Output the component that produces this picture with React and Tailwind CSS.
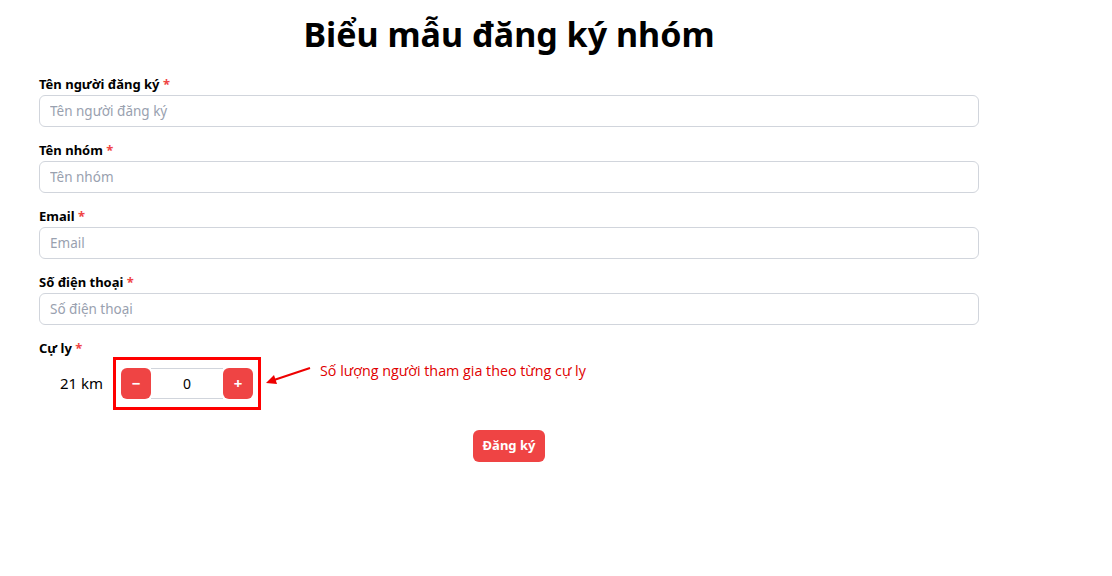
import { useState } from 'react';

const fields = [
  { label: 'Tên người đăng ký', placeholder: 'Tên người đăng ký' },
  { label: 'Tên nhóm', placeholder: 'Tên nhóm' },
  { label: 'Email', placeholder: 'Email' },
  { label: 'Số điện thoại', placeholder: 'Số điện thoại' },
];

function Label({ children }) {
  return (
    <label className="block text-[13px] font-bold leading-5 text-black mb-px">
      {children} <span className="text-[#ef4444]">*</span>
    </label>
  );
}

export default function App() {
  const [count, setCount] = useState(0);

  return (
    <div className="min-h-screen bg-white font-['Noto_Sans',sans-serif] text-black">
      <div className="w-[940px] ml-[39px]">
        <h1 className="text-center text-[34px] font-bold leading-[44px] pt-[12px] mb-[18px]">
          Biểu mẫu đăng ký nhóm
        </h1>

        {fields.map((f) => (
          <div key={f.label} className="mb-[13px]">
            <Label>{f.label}</Label>
            <input
              placeholder={f.placeholder}
              className="w-full h-[32px] rounded-md border border-gray-300 px-[10px] text-[13.5px] placeholder:text-gray-400 outline-none"
            />
          </div>
        ))}

        <div>
          <Label>Cự ly</Label>
          <div className="flex items-center pl-[21px] mt-[10px]">
            <span className="text-[15px] w-[61px]">21 km</span>
            <div className="relative flex items-center">
              <div className="absolute -left-[8px] -top-[11px] w-[148px] h-[53px] border-[3px] border-[#ff0000] pointer-events-none" />
              <button
                onClick={() => setCount(Math.max(0, count - 1))}
                className="w-[30px] h-[31px] rounded-md bg-[#ef4444] text-white text-[15px] font-bold leading-none"
              >
                −
              </button>
              <input
                value={count}
                readOnly
                className="w-[72px] h-[31px] border-y border-gray-300 text-center text-[14px] outline-none"
              />
              <button
                onClick={() => setCount(count + 1)}
                className="w-[30px] h-[31px] rounded-md bg-[#ef4444] text-white text-[15px] font-bold leading-none"
              >
                +
              </button>
              <svg className="absolute left-[143px] top-[-2px]" width="48" height="20" viewBox="0 0 48 20">
                <line x1="46" y1="2" x2="10" y2="14" stroke="#ee0000" strokeWidth="2" />
                <polygon points="2,17 10,9 13,18" fill="#ee0000" />
              </svg>
              <span className="absolute left-[199px] top-[-8px] whitespace-nowrap text-[14.3px] text-[#e00000] font-['Open_Sans',sans-serif]">
                Số lượng người tham gia theo từng cự ly
              </span>
            </div>
          </div>
        </div>

        <div className="flex justify-center mt-[31px]">
          <button className="h-[32px] px-[10px] rounded-md bg-[#ef4444] text-white text-[13px] font-bold">
            Đăng ký
          </button>
        </div>
      </div>
    </div>
  );
}
